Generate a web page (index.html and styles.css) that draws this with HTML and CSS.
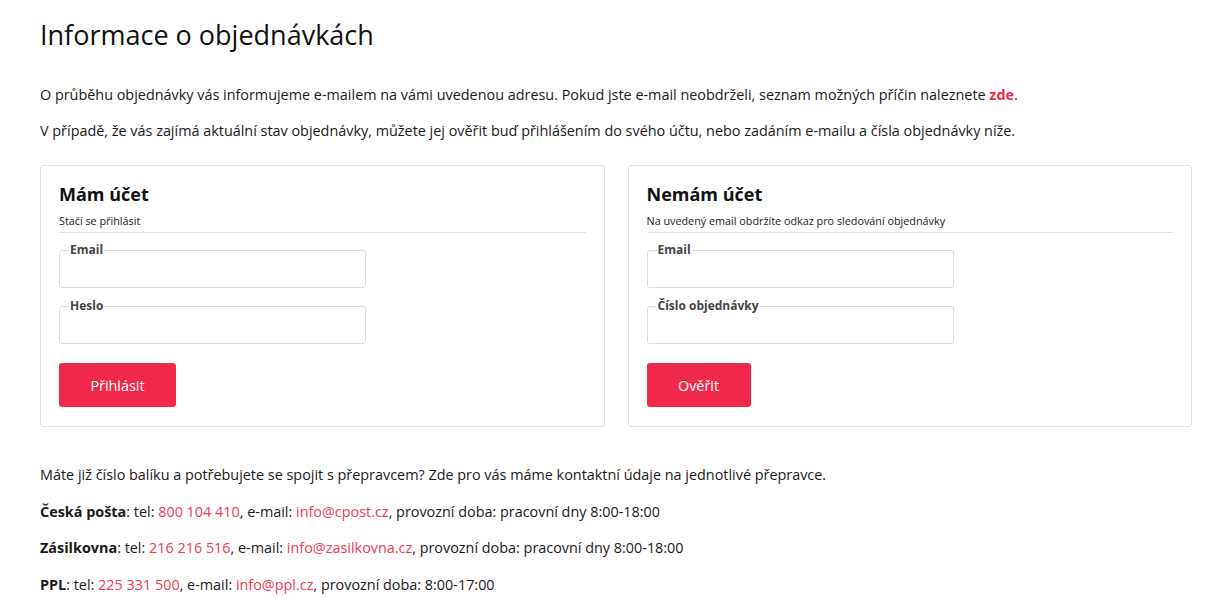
FILE: index.html
```html
<!DOCTYPE html>
<html lang="cs">
<head>
<meta charset="utf-8">
<title>Informace o objednávkách</title>
<link rel="stylesheet" href="styles.css">
</head>
<body>
<main class="page">
  <h1 class="title">Informace o objednávkách</h1>
  <p class="text">O průběhu objednávky vás informujeme e-mailem na vámi uvedenou adresu. Pokud jste e-mail neobdrželi, seznam možných příčin naleznete <a class="link-strong" href="#">zde</a>.</p>
  <p class="text">V případě, že vás zajímá aktuální stav objednávky, můžete jej ověřit buď přihlášením do svého účtu, nebo zadáním e-mailu a čísla objednávky níže.</p>

  <div class="cards">
    <section class="card">
      <h2 class="card-title">Mám účet</h2>
      <p class="card-sub">Stačí se přihlásit</p>
      <form class="form">
        <fieldset class="field">
          <legend class="field-label">Email</legend>
          <input class="field-input" type="email">
        </fieldset>
        <fieldset class="field">
          <legend class="field-label">Heslo</legend>
          <input class="field-input" type="password">
        </fieldset>
        <button class="btn btn-login" type="button">Přihlásit</button>
      </form>
    </section>
    <section class="card">
      <h2 class="card-title">Nemám účet</h2>
      <p class="card-sub">Na uvedený email obdržíte odkaz pro sledování objednávky</p>
      <form class="form">
        <fieldset class="field">
          <legend class="field-label">Email</legend>
          <input class="field-input" type="email">
        </fieldset>
        <fieldset class="field">
          <legend class="field-label">Číslo objednávky</legend>
          <input class="field-input" type="text">
        </fieldset>
        <button class="btn btn-verify" type="button">Ověřit</button>
      </form>
    </section>
  </div>

  <div class="carriers">
    <p class="text">Máte již číslo balíku a potřebujete se spojit s přepravcem? Zde pro vás máme kontaktní údaje na jednotlivé přepravce.</p>
    <p class="text"><strong>Česká pošta</strong>: tel: <a class="link" href="#">800 104 410</a>, e-mail: <a class="link" href="#">info@cpost.cz</a>, provozní doba: pracovní dny 8:00-18:00</p>
    <p class="text"><strong>Zásilkovna</strong>: tel: <a class="link" href="#">216 216 516</a>, e-mail: <a class="link" href="#">info@zasilkovna.cz</a>, provozní doba: pracovní dny 8:00-18:00</p>
    <p class="text"><strong>PPL</strong>: tel: <a class="link" href="#">225 331 500</a>, e-mail: <a class="link" href="#">info@ppl.cz</a>, provozní doba: 8:00-17:00</p>
  </div>
</main>
</body>
</html>
```

FILE: styles.css
```css
* { box-sizing: border-box; }

html, body {
  margin: 0;
  padding: 0;
  background: #fff;
}

body {
  font-family: "Open Sans", "Noto Sans", sans-serif;
  color: #1a1a1a;
  font-size: 14.4px;
  line-height: 22px;
}

.page {
  width: 1152px;
  margin-left: 40px;
  padding-top: 16px;
}

.title {
  margin: 0 0 30px;
  font-size: 27px;
  line-height: 38px;
  font-weight: 400;
  color: #111;
}

.text {
  margin: 0 0 14px;
}

.link-strong {
  color: #f0294a;
  font-weight: 700;
  text-decoration: none;
}

.link {
  color: #ef3a57;
  text-decoration: none;
}

.cards {
  display: grid;
  grid-template-columns: 1fr 1fr;
  gap: 23px;
  margin-top: 23px;
  margin-bottom: 37px;
}

.card {
  border: 1px solid #e0e0e0;
  border-radius: 3px;
  padding: 15px 18px 19px;
}

.card-title {
  margin: 0;
  font-size: 18px;
  line-height: 26px;
  font-weight: 700;
  color: #111;
}

.card-sub {
  margin: 5px 0 0;
  font-size: 10.8px;
  line-height: 18px;
  padding-bottom: 2px;
  border-bottom: 1px solid #e0e0e0;
}

.form {
  display: flex;
  flex-direction: column;
  align-items: flex-start;
  padding-top: 9px;
}

.field {
  width: 307px;
  margin: 0 0 10px;
  padding: 0 9px;
  border: 1px solid #dcdcdc;
  border-radius: 3px;
}

.field-label {
  padding: 0 1px;
  font-size: 12px;
  line-height: 16px;
  font-weight: 700;
  color: #444;
}

.field-input {
  display: block;
  width: 100%;
  height: 29px;
  border: 0;
  padding: 0;
  outline: none;
  background: transparent;
  font: inherit;
}

.btn {
  margin-top: 9px;
  height: 44px;
  border: 0;
  border-radius: 3px;
  background: #f0294a;
  color: #fff;
  font-family: inherit;
  font-size: 14.4px;
  cursor: pointer;
}

.btn-login { width: 117px; }
.btn-verify { width: 104px; }

.carriers .text {
  margin-bottom: 14.5px;
}

strong { font-weight: 700; }
```
